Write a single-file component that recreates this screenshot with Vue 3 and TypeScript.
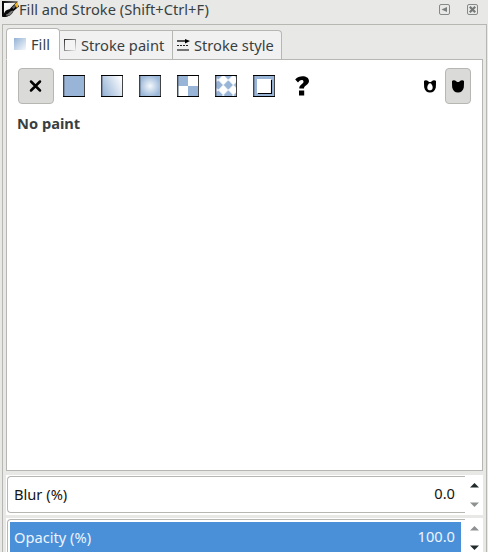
<script setup lang="ts">
import { ref } from 'vue'

type Tab = { id: string; label: string }
const tabs: Tab[] = [
  { id: 'fill', label: 'Fill' },
  { id: 'stroke', label: 'Stroke paint' },
  { id: 'style', label: 'Stroke style' },
]
const activeTab = ref('fill')

const paints: string[] = ['none', 'flat', 'linear', 'radial', 'mesh', 'pattern', 'swatch', 'unknown']
const activePaint = ref('none')
const fillRule = ref('nonzero')

const sliders = [
  { id: 'blur', label: 'Blur (%)', value: 0 },
  { id: 'opacity', label: 'Opacity (%)', value: 100 },
]
</script>

<template>
  <div class="dialog">
    <header class="titlebar">
      <svg class="brush" width="17" height="17" viewBox="0 0 17 17">
        <defs>
          <linearGradient id="sheet" x1="0" y1="0" x2="1" y2="1">
            <stop offset="0" stop-color="#fff" /><stop offset=".5" stop-color="#eee" /><stop offset="1" stop-color="#777" />
          </linearGradient>
          <linearGradient id="edge" x1="0" y1="0" x2="1" y2="0">
            <stop offset="0" stop-color="#000" /><stop offset="1" stop-color="#888" />
          </linearGradient>
        </defs>
        <path d="M0 0H16L15 2H2V14L0 16Z" fill="url(#edge)" />
        <path d="M2 2H13L2 14Z" fill="url(#sheet)" />
        <path d="M0 16C2 14 2 10 5 9C7 8.500 8 8 9 6.500L14.500 1L17 5.500L11.500 10C10 14 6 16.500 0 16Z" fill="#080808" />
        <path d="M4 13.500C7 13 7 10.500 10.500 9.500L11 10.500C9 14 7 15 4 14.500Z" fill="#777" />
        <path d="M10 6.500L12.500 4L14 5.500L11.500 8Z" fill="#666" />
        <path d="M12.500 3.500L16 .5V6L15 7Z" fill="#f5b51b" />
      </svg>
      <span class="title">Fill and Stroke (Shift+Ctrl+F)</span>
      <button class="window-button" aria-label="Iconify">
        <svg width="11" height="11" viewBox="0 0 11 11">
          <rect x=".5" y=".5" width="10" height="10" rx="1.500" fill="none" stroke="#858988" />
          <path d="M2.500 5.500L8 3V8Z" fill="#7b7f7e" />
        </svg>
      </button>
      <button class="window-button" aria-label="Close">
        <svg width="11" height="11" viewBox="0 0 11 11">
          <rect x=".5" y=".5" width="10" height="10" rx="1.500" fill="none" stroke="#858988" />
          <path d="M2.800 2.800L8.200 8.200M8.200 2.800L2.800 8.200" stroke="#747877" stroke-width="2.200" />
        </svg>
      </button>
    </header>

    <main class="frame">
      <nav class="tabs">
        <button v-for="tab in tabs" :key="tab.id" class="tab" :class="['tab-' + tab.id, { active: activeTab === tab.id }]" @click="activeTab = tab.id">
          <svg v-if="tab.id === 'fill'" width="12" height="12" viewBox="0 0 12 12">
            <defs><linearGradient id="tabfill" x1="0" y1="0" x2="1" y2="1"><stop offset="0" stop-color="#93b2d5" /><stop offset="1" stop-color="#f6f9fc" /></linearGradient></defs>
            <rect width="12" height="12" fill="url(#tabfill)" />
          </svg>
          <svg v-else-if="tab.id === 'stroke'" width="12" height="12" viewBox="0 0 12 12">
            <defs><linearGradient id="tabpaint" x1="0" y1="0" x2="1" y2="1"><stop offset="0" stop-color="#333" /><stop offset="1" stop-color="#e8e8e8" /></linearGradient></defs>
            <rect x=".5" y=".5" width="11" height="11" fill="#f4f4f4" stroke="url(#tabpaint)" />
          </svg>
          <svg v-else width="13" height="12" viewBox="0 0 13 12">
            <path d="M0 2H10" stroke="#000" stroke-width="1.300" /><path d="M8 0L13 2L8 4.500Z" />
            <path d="M0 6.500H12" stroke="#222" stroke-dasharray="2 1" /><path d="M0 11H12" stroke="#555" stroke-width="1.600" />
          </svg>
          <span>{{ tab.label }}</span>
        </button>
      </nav>

      <section class="page">
        <div class="toolbar">
          <button v-for="paint in paints" :key="paint" class="paint" :class="{ active: activePaint === paint }" :aria-label="paint" @click="activePaint = paint">
            <svg width="22" height="22" viewBox="0 0 22 22">
              <defs>
                <linearGradient id="lin" x1="0" y1=".7" x2="1" y2=".2"><stop offset="0" stop-color="#98b5d7" /><stop offset="1" stop-color="#fff" /></linearGradient>
                <radialGradient id="rad"><stop offset="0" stop-color="#f4f8fc" /><stop offset="1" stop-color="#9bb8d9" /></radialGradient>
                <pattern id="diamonds" x="3.300" y="0" width="10" height="10" patternUnits="userSpaceOnUse"><path d="M5 0L9.800 5L5 10L.2 5Z" fill="#fff" stroke="#fff" stroke-width=".6" /></pattern>
              </defs>
              <path v-if="paint === 'none'" d="M6 6.500L15 15.500M15 6.500L6 15.500" stroke="#000" stroke-width="2.500" stroke-linecap="round" />
              <path v-else-if="paint === 'unknown'" d="M4.200 4.500C8-.3 18 .2 18 6C18 10 13 10 13 13.500H8.300C8 9.500 12.500 9.300 12.500 6.500C12.500 4.300 9 4.300 7 7.500ZM8 15.500H13.200V20.500H8Z" />
              <template v-else>
                <rect width="22" height="22" :fill="paint === 'linear' ? 'url(#lin)' : paint === 'radial' ? 'url(#rad)' : '#98b5d7'" />
                <path v-if="paint === 'mesh'" d="M11 1H21V11H11ZM1 11H11V21H1Z" fill="#fff" />
                <rect v-if="paint === 'pattern'" width="22" height="22" fill="url(#diamonds)" />
                <template v-if="paint === 'swatch'">
                  <path d="M4 4H18V18H4Z" fill="#fff" /><path d="M5 18.500H18.500V5" fill="none" stroke="#000" stroke-width="1.100" />
                </template>
                <path d="M.5 0V22M21.500 0V22" stroke="#444" /><path d="M1.500 1V21" stroke="#677486" stroke-width=".6" />
                <path d="M0 .5H22M0 21.500H22" stroke="#000" />
              </template>
            </svg>
          </button>
          <div class="rules">
            <button class="rule" aria-label="Even-odd" :class="{ active: fillRule === 'evenodd' }" @click="fillRule = 'evenodd'">
              <svg width="12" height="13" viewBox="0 0 12 13"><path fill-rule="evenodd" d="M0 1C1 0 3 0 4.500 1.500C5.300 2.200 6.700 2.200 7.500 1.500C9 0 11 0 12 1C12 3 12 5 11.800 7.500C11.200 10.500 9 12.500 6 12.500C3 12.500 .8 10.500 .2 7.500C0 5 0 3 0 1ZM6 3.200C5 3 4.500 4 4 5C2.800 7 3 10.300 6 10.300C9 10.300 9.200 7 8 5C7.500 4 7 3 6 3.200Z" /></svg>
            </button>
            <button class="rule" aria-label="Nonzero" :class="{ active: fillRule === 'nonzero' }" @click="fillRule = 'nonzero'">
              <svg width="12" height="13" viewBox="0 0 12 13"><path d="M0 1C1 0 3 0 4.500 1.500C5.300 2.200 6.700 2.200 7.500 1.500C9 0 11 0 12 1C12 3 12 5 11.800 7.500C11.200 10.500 9 12.500 6 12.500C3 12.500 .8 10.500 .2 7.500C0 5 0 3 0 1Z" /></svg>
            </button>
          </div>
        </div>
        <h1 class="heading">No paint</h1>
      </section>

      <div v-for="s in sliders" :key="s.id" class="spin" :class="s.id">
        <div class="entry">
          <div class="bar" :style="{ width: s.value + '%' }"></div>
          <div class="entry-text"><span>{{ s.label }}</span><span class="value">{{ s.value.toFixed(1) }}</span></div>
        </div>
        <div class="steppers">
          <svg width="9" height="5" viewBox="0 0 9 5" :class="{ disabled: s.value === 100 }"><path d="M0 4.500L4.500 0L9 4.500Z" /></svg>
          <svg width="9" height="5" viewBox="0 0 9 5" :class="{ disabled: s.value === 0 }"><path d="M0 .5L4.500 5L9 .5Z" /></svg>
        </div>
      </div>
    </main>
  </div>
</template>

<style>
body { background: #e8e8e7; overflow: hidden; }
</style>

<style scoped>
* { box-sizing: border-box; }
.dialog { width: 488px; height: 552px; overflow: hidden; background: #e8e8e7; color: #393f41; font: 14.667px/20px "Noto Sans", sans-serif; }
button { font: inherit; color: inherit; background: none; border: 0; padding: 0; }
svg { display: block; flex: none; }
.titlebar { display: flex; align-items: center; height: 24px; padding: 0 10px 5px 2px; }
.title { flex: 1; white-space: nowrap; padding-bottom: 2px; }
.window-button { margin-left: 17px; }
.frame { height: 540px; margin-left: 2px; width: 485px; border: 1px solid #b6b6b3; padding: 3px 3px 0; }
.tabs { display: flex; align-items: flex-end; height: 32px; margin-bottom: -1px; position: relative; }
.tab { display: flex; align-items: center; height: 30px; background: #f1f1f1; border: 1px solid #b6b6b3; border-left: 0; white-space: nowrap; }
.tab-fill { width: 54px; border-left: 1px solid #b6b6b3; padding: 0 0 1px 7px; gap: 5px; }
.tab-stroke { width: 113px; padding-left: 4px; gap: 5px; }
.tab-style { width: 109px; padding-left: 4px; gap: 4px; border-radius: 0 4px 0 0; }
.tab.active { height: 32px; background: #fff; border-bottom-color: #fff; border-radius: 4px 4px 0 0; }
.page { height: 412px; background: #fff; border: 1px solid #b6b6b3; padding: 8px 11px; }
.toolbar { display: flex; gap: 2px; height: 36px; }
.paint, .rule { display: flex; align-items: center; justify-content: center; height: 36px; border: 1px solid transparent; border-radius: 4px; }
.paint { width: 36px; }
.paint.active, .rule.active { background: #dadad8; border-color: #b6b6b3; }
.rules { display: flex; margin-left: auto; gap: 2px; }
.rule { width: 26px; }
.heading { margin: 9px 0 0 -1px; font-size: 14.667px; line-height: 20px; font-weight: 700; }
.spin { display: flex; background: #fff; height: 40px; margin-bottom: 3px; }
.page + .spin { margin-top: 4px; }
.entry { width: 458px; height: 37px; margin-top: 1px; border: 1px solid #b6b6b3; border-right: 0; border-radius: 4px 0 0 4px; display: grid; padding: 2px 4px 0 2px; margin-left: 1px; }
.bar { grid-area: 1 / 1; background: #4a90d9; height: 40px; }
.entry-text { grid-area: 1 / 1; z-index: 1; display: flex; justify-content: space-between; padding: 5px 6px 0 4px; color: #151515; }
.value { margin-top: -1px; }
.opacity .entry-text { color: #edf4fb; }
.spin.opacity { height: 44px; }
.opacity .entry { height: 44px; }
.steppers { display: flex; flex-direction: column; gap: 14px; padding: 8px 0 0 5px; fill: #222a2c; }
.disabled { fill: #8e9192; }
</style>
